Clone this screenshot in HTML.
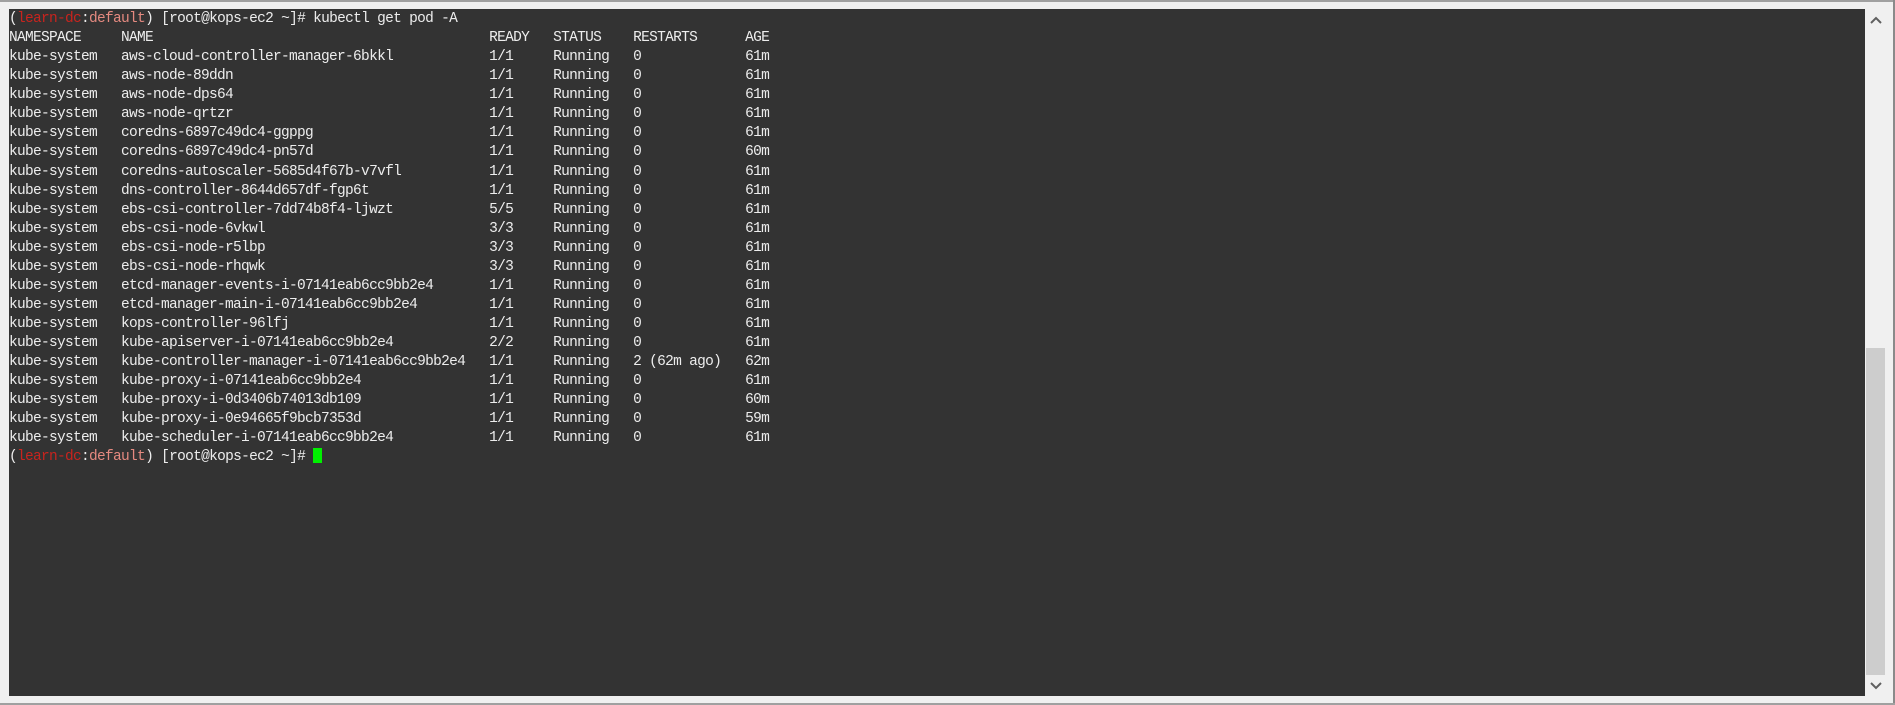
<!DOCTYPE html>
<html><head><meta charset="utf-8"><style>
html,body{margin:0;padding:0;width:1895px;height:705px;overflow:hidden;background:#f0f0f0;}
.top{position:absolute;left:0;top:0;width:1895px;height:2px;background:#a0a0a0;}
.rb{position:absolute;right:0;top:0;width:2px;height:705px;background:#8a8a8a;}
.bb{position:absolute;left:0;bottom:0;width:1895px;height:2px;background:#a0a0a0;}
.term{position:absolute;left:9px;top:9px;width:1856px;height:687px;background:#333333;}
pre{margin:0;position:absolute;left:0;top:1px;font-family:"Liberation Mono","Noto Sans CJK KR",monospace;font-size:14.5px;letter-spacing:-0.7px;line-height:19.07px;color:#ededed;}
.r{color:#c8241e}.p{color:#e58a80}
.cur{display:inline-block;width:9px;height:15px;background:#00f000;vertical-align:-3px;}
.sb{position:absolute;left:1866px;top:348px;width:19px;height:327px;background:#cdcdcd;}
.ar{position:absolute;left:1870px;width:12px;height:10px;}
</style></head><body>
<div class="top"></div><div class="rb"></div><div class="bb"></div>
<div class="term"><pre>(<span class="r">learn-dc</span>:<span class="p">default</span>) [root@kops-ec2 ~]# kubectl get pod -A
NAMESPACE     NAME                                          READY   STATUS    RESTARTS      AGE
kube-system   aws-cloud-controller-manager-6bkkl            1/1     Running   0             61m
kube-system   aws-node-89ddn                                1/1     Running   0             61m
kube-system   aws-node-dps64                                1/1     Running   0             61m
kube-system   aws-node-qrtzr                                1/1     Running   0             61m
kube-system   coredns-6897c49dc4-ggppg                      1/1     Running   0             61m
kube-system   coredns-6897c49dc4-pn57d                      1/1     Running   0             60m
kube-system   coredns-autoscaler-5685d4f67b-v7vfl           1/1     Running   0             61m
kube-system   dns-controller-8644d657df-fgp6t               1/1     Running   0             61m
kube-system   ebs-csi-controller-7dd74b8f4-ljwzt            5/5     Running   0             61m
kube-system   ebs-csi-node-6vkwl                            3/3     Running   0             61m
kube-system   ebs-csi-node-r5lbp                            3/3     Running   0             61m
kube-system   ebs-csi-node-rhqwk                            3/3     Running   0             61m
kube-system   etcd-manager-events-i-07141eab6cc9bb2e4       1/1     Running   0             61m
kube-system   etcd-manager-main-i-07141eab6cc9bb2e4         1/1     Running   0             61m
kube-system   kops-controller-96lfj                         1/1     Running   0             61m
kube-system   kube-apiserver-i-07141eab6cc9bb2e4            2/2     Running   0             61m
kube-system   kube-controller-manager-i-07141eab6cc9bb2e4   1/1     Running   2 (62m ago)   62m
kube-system   kube-proxy-i-07141eab6cc9bb2e4                1/1     Running   0             61m
kube-system   kube-proxy-i-0d3406b74013db109                1/1     Running   0             60m
kube-system   kube-proxy-i-0e94665f9bcb7353d                1/1     Running   0             59m
kube-system   kube-scheduler-i-07141eab6cc9bb2e4            1/1     Running   0             61m
(<span class="r">learn-dc</span>:<span class="p">default</span>) [root@kops-ec2 ~]# <span class="cur"></span></pre></div>
<div class="sb"></div>
<svg class="ar" style="top:15px" viewBox="0 0 12 10"><path d="M1 8 L6 3 L11 8" stroke="#606060" stroke-width="2" fill="none"/></svg>
<svg class="ar" style="top:681px" viewBox="0 0 12 10"><path d="M1 2 L6 7 L11 2" stroke="#606060" stroke-width="2" fill="none"/></svg>
</body></html>
